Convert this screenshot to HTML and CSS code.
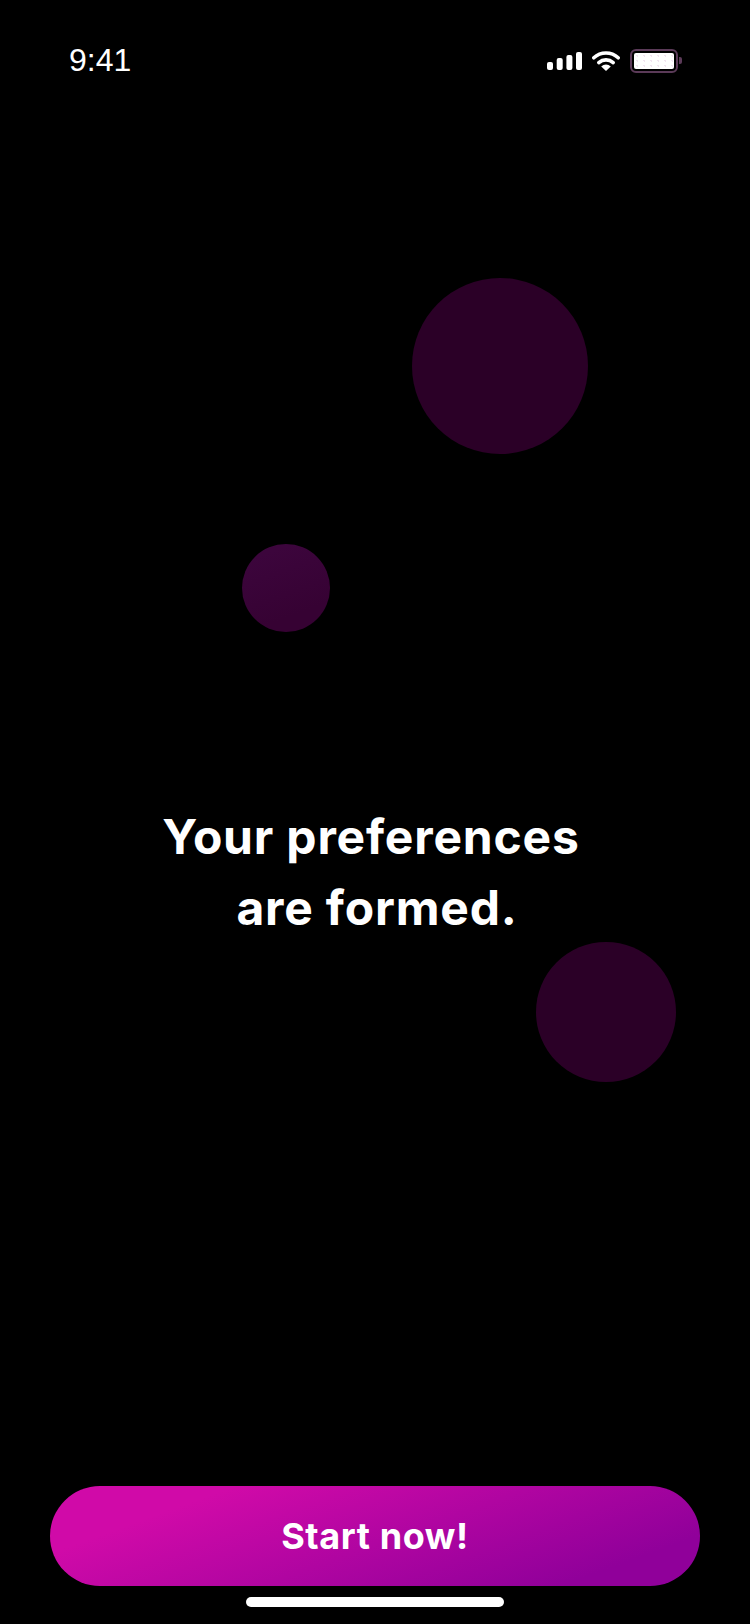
FILE: index.html
```html
<!DOCTYPE html>
<html lang="en">
<head>
	<meta charset="utf-8"/>
	<title>Your preferences are formed</title>
	<link rel="stylesheet" href="styles.css">
</head>
<body>
<div class="screen">
	<!--状态栏-->
	<div class="status-bar">
		<span class="status-bar__time">9:41</span>
		<div class="status-bar__icons">
			<svg class="icon-signal" width="35" height="18" viewBox="0 0 35 18">
				<rect x="0" y="10" width="6" height="8" rx="2" fill="#fff"/>
				<rect x="9.7" y="6" width="6" height="12" rx="2" fill="#fff"/>
				<rect x="19.4" y="3" width="6" height="15" rx="2" fill="#fff"/>
				<rect x="29" y="0" width="6" height="18" rx="2" fill="#fff"/>
			</svg>
			<svg class="icon-wifi" width="28" height="20" viewBox="0 0 28 20">
				<path d="M1.8 6.8 A18 18 0 0 1 26.2 6.8" fill="none" stroke="#fff" stroke-width="3.6" stroke-linecap="round"/>
				<path d="M6.8 11.6 A11 11 0 0 1 21.2 11.6" fill="none" stroke="#fff" stroke-width="3.6" stroke-linecap="round"/>
				<path d="M14 20 L9.2 15.4 A7 7 0 0 1 18.8 15.4 Z" fill="#fff"/>
			</svg>
			<div class="battery">
				<div class="battery__level"></div>
				<div class="battery__nub"></div>
			</div>
		</div>
	</div>

	<!--背景圆-->
	<div class="bubble bubble_big"></div>
	<div class="bubble bubble_small"></div>
	<div class="bubble bubble_mid"></div>

	<div class="message">
		<h1 class="message__title">Your preferences 
are formed.</h1>
	</div>

	<div class="footer">
		<a class="start-btn" href="javascript:void(0);">Start now!</a>
		<div class="home-bar"></div>
	</div>
</div>
</body>
</html>
```

FILE: styles.css
```css
html,body{
	margin: 0;
	padding: 0;
	background: #000;
}
.screen{
	position: relative;
	display: flex;
	flex-direction: column;
	width: 750px;
	height: 1624px;
	overflow: hidden;
	background: #000;
	color: #fff;
	font-family: "Inter", "Liberation Sans", sans-serif;
}
/*状态栏*/
.status-bar{
	display: flex;
	justify-content: space-between;
	align-items: center;
	height: 26px;
	padding: 48px 72px 0 69px;
}
.status-bar__time{
	margin-top: -2px;
	font-family: "Liberation Sans", sans-serif;
	font-size: 32px;
	line-height: 26px;
}
.status-bar__icons{
	display: flex;
	align-items: center;
	gap: 10px;
}
.battery{
	position: relative;
	box-sizing: border-box;
	width: 48px;
	height: 24px;
	padding: 2px;
	border: 2px solid #5b3a58;
	border-radius: 6px;
}
.battery__level{
	height: 100%;
	background-color: #fff;
	background-image: radial-gradient(circle, #f1e4f0 1px, transparent 1px);
	background-size: 7px 5px;
	border-radius: 2px;
}
.battery__nub{
	position: absolute;
	top: 6px;
	right: -6px;
	width: 3px;
	height: 7px;
	background: #5b3a58;
	border-radius: 0 2px 2px 0;
}
/*背景圆*/
.bubble{
	position: absolute;
	border-radius: 50%;
}
.bubble_big{
	top: 278px;
	left: 412px;
	width: 176px;
	height: 176px;
	background: #2b0027;
}
.bubble_small{
	top: 544px;
	left: 242px;
	width: 88px;
	height: 88px;
	background: linear-gradient(160deg, #3c053c 15%, #360233 75%);
}
.bubble_mid{
	top: 942px;
	left: 536px;
	width: 140px;
	height: 140px;
	background: #2b0027;
}
/*文案*/
.message{
	flex: 1;
	position: relative;
	padding-top: 727px;
	text-align: center;
}
.message__title{
	margin: 0;
	padding-left: 4px;
	font-size: 48px;
	font-weight: 700;
	letter-spacing: 0.8px;
	line-height: 71px;
	white-space: pre;
}
/*底部按钮*/
.footer{
	display: flex;
	flex-direction: column;
	align-items: center;
	padding-bottom: 17px;
}
.start-btn{
	display: block;
	width: 650px;
	height: 100px;
	line-height: 100px;
	text-align: center;
	text-decoration: none;
	color: #fff;
	font-size: 36px;
	font-weight: 700;
	letter-spacing: 0.6px;
	border-radius: 50px;
	background: linear-gradient(160deg, #d00aa8 20%, #90009a 85%);
}
.home-bar{
	width: 258px;
	height: 10px;
	margin-top: 11px;
	background: #fff;
	border-radius: 5px;
}
```
